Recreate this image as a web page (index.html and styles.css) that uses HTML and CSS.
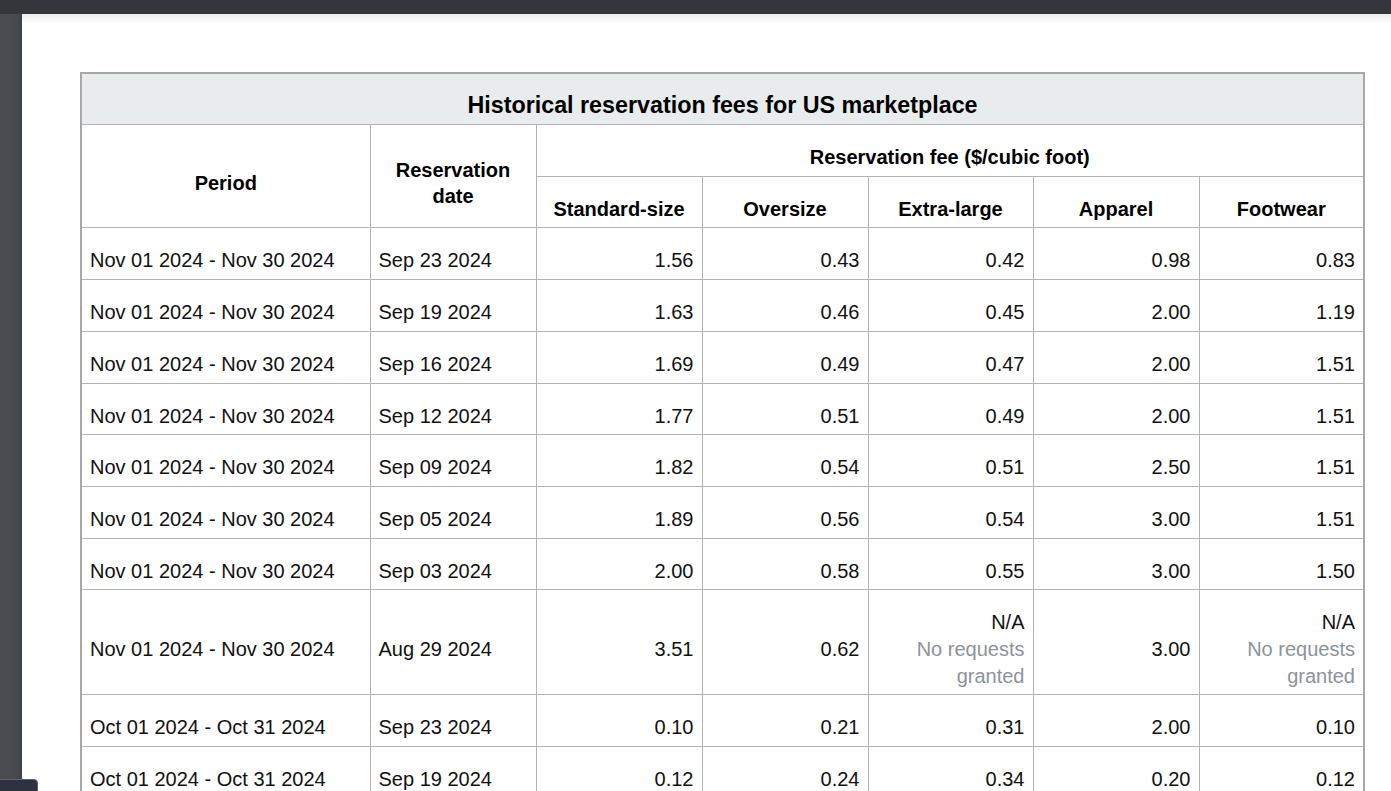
FILE: index.html
```html
<!DOCTYPE html>
<html lang="en">
<head>
<meta charset="utf-8">
<title>Historical reservation fees for US marketplace</title>
<link rel="stylesheet" href="styles.css">
</head>
<body>
<div class="topbar"></div>
<div class="frame">
  <aside class="sidebar"></aside>
  <main class="page">
    <table class="fees">
      <colgroup>
        <col class="c-period">
        <col class="c-date">
        <col class="c-fee">
        <col class="c-fee">
        <col class="c-fee-n">
        <col class="c-fee">
        <col class="c-fee-n">
      </colgroup>
      <thead>
        <tr><th class="title" colspan="7">Historical reservation fees for US marketplace</th></tr>
        <tr>
          <th rowspan="2">Period</th>
          <th rowspan="2">Reservation<br>date</th>
          <th colspan="5">Reservation fee ($/cubic foot)</th>
        </tr>
        <tr>
          <th>Standard-size</th>
          <th>Oversize</th>
          <th>Extra-large</th>
          <th>Apparel</th>
          <th>Footwear</th>
        </tr>
      </thead>
      <tbody>
        <tr><td>Nov 01 2024 - Nov 30 2024</td><td>Sep 23 2024</td><td class="num">1.56</td><td class="num">0.43</td><td class="num">0.42</td><td class="num">0.98</td><td class="num">0.83</td></tr>
        <tr><td>Nov 01 2024 - Nov 30 2024</td><td>Sep 19 2024</td><td class="num">1.63</td><td class="num">0.46</td><td class="num">0.45</td><td class="num">2.00</td><td class="num">1.19</td></tr>
        <tr><td>Nov 01 2024 - Nov 30 2024</td><td>Sep 16 2024</td><td class="num">1.69</td><td class="num">0.49</td><td class="num">0.47</td><td class="num">2.00</td><td class="num">1.51</td></tr>
        <tr><td>Nov 01 2024 - Nov 30 2024</td><td>Sep 12 2024</td><td class="num">1.77</td><td class="num">0.51</td><td class="num">0.49</td><td class="num">2.00</td><td class="num">1.51</td></tr>
        <tr><td>Nov 01 2024 - Nov 30 2024</td><td>Sep 09 2024</td><td class="num">1.82</td><td class="num">0.54</td><td class="num">0.51</td><td class="num">2.50</td><td class="num">1.51</td></tr>
        <tr><td>Nov 01 2024 - Nov 30 2024</td><td>Sep 05 2024</td><td class="num">1.89</td><td class="num">0.56</td><td class="num">0.54</td><td class="num">3.00</td><td class="num">1.51</td></tr>
        <tr><td>Nov 01 2024 - Nov 30 2024</td><td>Sep 03 2024</td><td class="num">2.00</td><td class="num">0.58</td><td class="num">0.55</td><td class="num">3.00</td><td class="num">1.50</td></tr>
        <tr><td>Nov 01 2024 - Nov 30 2024</td><td>Aug 29 2024</td><td class="num">3.51</td><td class="num">0.62</td><td class="num">N/A<br><span class="note">No requests<br>granted</span></td><td class="num">3.00</td><td class="num">N/A<br><span class="note">No requests<br>granted</span></td></tr>
        <tr><td>Oct 01 2024 - Oct 31 2024</td><td>Sep 23 2024</td><td class="num">0.10</td><td class="num">0.21</td><td class="num">0.31</td><td class="num">2.00</td><td class="num">0.10</td></tr>
        <tr><td>Oct 01 2024 - Oct 31 2024</td><td>Sep 19 2024</td><td class="num">0.12</td><td class="num">0.24</td><td class="num">0.34</td><td class="num">0.20</td><td class="num">0.12</td></tr>
      </tbody>
    </table>
  </main>
</div>
<div class="corner-tab"></div>
</body>
</html>
```
FILE: styles.css
```css
html, body {
  margin: 0;
  padding: 0;
  height: 100%;
  overflow: hidden;
}
body {
  background: #ffffff;
  font-family: "Liberation Sans", Arial, sans-serif;
  color: #111111;
}
.topbar {
  height: 14px;
  background: #33373b;
}
.frame {
  display: flex;
  height: calc(100% - 14px);
}
.sidebar {
  width: 22px;
  flex: 0 0 22px;
  background: linear-gradient(to right, #494d51 0, #464a4e 18px, #3c4044 22px);
}
.page {
  flex: 1;
  background: linear-gradient(to bottom, #ececec 0, #ffffff 10px, #ffffff 100%);
  padding: 58px 0 0 58px;
  overflow: hidden;
}
.fees {
  border-collapse: collapse;
  table-layout: fixed;
  width: 1283px;
  border: 2px solid #a8a8a8;
  font-size: 20px;
  line-height: 26.7px;
}
.c-period { width: 289px; }
.c-date { width: 166px; }
.c-fee { width: 166px; }
.c-fee-n { width: 165px; }
.fees th,
.fees td {
  border: 1px solid #b3b3b3;
  padding: 19px 8px 5px;
  vertical-align: middle;
}
.fees th {
  font-weight: bold;
  text-align: center;
  color: #000;
}
.fees th.title {
  background: #e8ecec;
  font-size: 23.3px;
  padding: 18px 8px 6px;
  line-height: 26px;
  border-bottom: 1px solid #b3b3b3;
}
.fees td {
  text-align: left;
  color: #111;
}
.fees td.num {
  text-align: right;
}
.note {
  color: #8d9399;
}
.corner-tab {
  position: absolute;
  left: -2px;
  bottom: -4px;
  width: 38px;
  height: 14px;
  background: #2e3140;
  border: 1px solid #5d6070;
  border-top-right-radius: 4px;
}
```
